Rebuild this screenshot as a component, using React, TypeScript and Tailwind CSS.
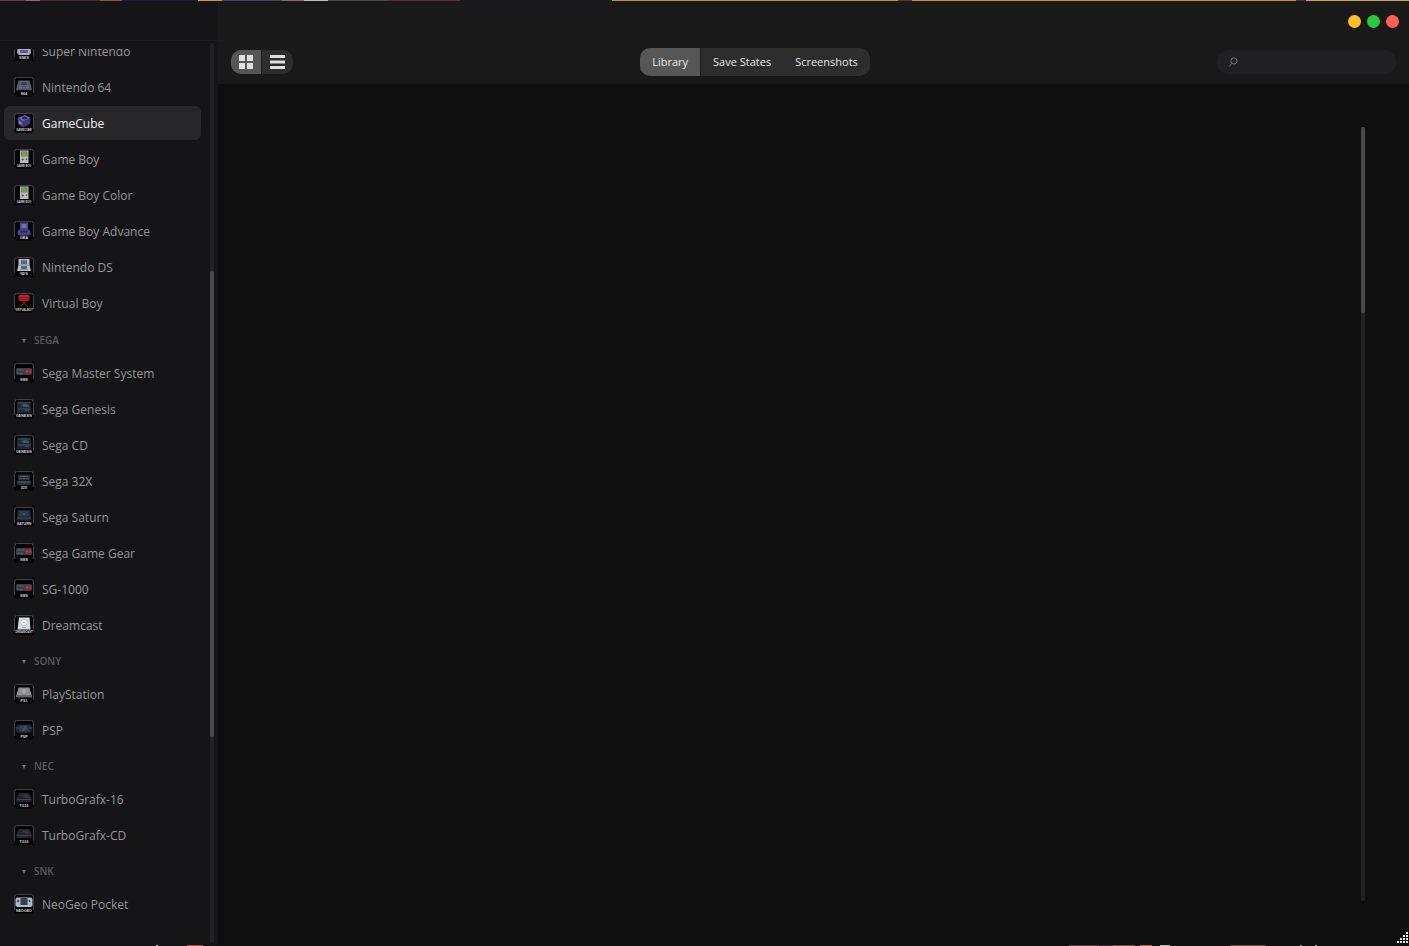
import { ReactNode } from 'react';

interface ConsoleItem {
  name: string;
  icon: ReactNode;
}

interface ConsoleGroup {
  label: string;
  items: ConsoleItem[];
}

const Tile = ({ label, children }: { label: string; children: ReactNode }) => (
  <svg viewBox="0 0 20 20" className="size-5 shrink-0" aria-hidden="true">
    <rect x="0.5" y="0.5" width="19" height="19" rx="2" fill="#030305" stroke="#0b0b0d" />
    <path d="M0.6 16V2.6a2 2 0 0 1 2-2h14.8a2 2 0 0 1 2 2V16" fill="none" stroke="#55585c" strokeWidth="0.8" />
    {children}
    <text x="10" y="18" textAnchor="middle" fontSize={label.length > 7 ? 2.7 : 3.6} fontWeight="700" fill="#d6d6da" fontFamily="Liberation Sans, sans-serif">{label}</text>
  </svg>
);

const snes = (
  <Tile label="SNES">
    <path d="M4 4h12l1 8-2 2H5l-2-2z" fill="#a9abc4" />
    <path d="M6 9h8v3H6z" fill="#5d56a0" />
  </Tile>
);
const n64 = (
  <Tile label="N64">
    <path d="M4.500 3.500h11l2 7.500c.8 1 .6 2.500-.5 2.500l-3-.5h-8l-3 .5c-1 0-1.300-1.500-.5-2.500z" fill="#53566c" />
    <path d="M7 5h6l.5 3.500h-7zM5 10.500h3M12 10.500h3" fill="#34374a" stroke="#777b92" strokeWidth="0.5" />
  </Tile>
);
const gamecube = (
  <Tile label="GAMECUBE">
    <path d="M3.500 5 11 2l5.500 3-7 3.500z" fill="#6863b4" />
    <path d="M3.500 5 9.500 8.500v6l-5.500-3.500z" fill="#4b4795" />
    <path d="M9.500 8.500l7-3.500-.5 6-6.500 3.500z" fill="#3f3a7d" />
    <ellipse cx="10.500" cy="5" rx="2.500" ry="1.200" fill="#25224f" />
    <path d="M5 8l2.500 1.500v2L5 10z" fill="#8e8ac5" />
  </Tile>
);
const gameboy = (
  <Tile label="GAME BOY">
    <path d="M6 1.500h8.500v12.500H6z" fill="#b8beb8" />
    <path d="M7 2.500h6.500v5H7z" fill="#69756f" />
    <path d="M8 3.200h4.500V7H8z" fill="#789b4c" />
    <path d="M7.500 10.500h2.500M8.700 9.300v2.500" stroke="#4d5350" strokeWidth="0.800" />
    <circle cx="12.500" cy="10.200" r="0.900" fill="#7c4961" />
  </Tile>
);
const gba = (
  <Tile label="GBA">
    <path d="M6 1.500h8v7l2.500 1.500v3.500l-2 1H5.500l-2-1V10L6 8.500z" fill="#49428b" />
    <path d="M7.500 3h5v4h-5z" fill="#6d729f" />
    <path d="M7 9h6v3H7z" fill="#343069" />
  </Tile>
);
const nds = (
  <Tile label="NDS">
    <path d="M4.500 2h11v6l1.500 6H3l1.500-6z" fill="#b4bdca" />
    <path d="M7 3.200h6v4H7zM7 9h6v3.500H7z" fill="#59657a" />
    <path d="M4.500 8h11" stroke="#79869b" strokeWidth="0.800" />
  </Tile>
);
const virtualBoy = (
  <Tile label="VIRTUALBOY">
    <path d="M4.500 3l1-1h9l1 1v4l-1.500 1H6L4.500 7z" fill="#c5202b" />
    <path d="M5 4.500h10M5.500 6.500h9" stroke="#781019" strokeWidth="0.700" />
    <path d="M8.500 8l1.500 2 1.500-2M10 10l-4.500 4M10 10l4.500 4" fill="none" stroke="#8b1a22" strokeWidth="1" />
  </Tile>
);
const masterSystem = (
  <Tile label="SMS">
    <path d="M3 5h14l1 1v5l-1 1H3l-1-1V6z" fill="#373e48" />
    <path d="M10.500 7l1.500-1H17v5h-4.500L10.500 9.500z" fill="#842c36" />
    <path d="M3 7h7M3 10.500h6" stroke="#5b6470" strokeWidth="0.800" />
    <circle cx="13" cy="8.500" r="1.100" fill="#b54650" />
    <circle cx="15.800" cy="8.500" r="0.900" fill="#b54650" />
  </Tile>
);
const genesis = (
  <Tile label="GENESIS">
    <path d="M3.500 2.500h13l1 11.500h-15z" fill="#1b2937" />
    <path d="M4 4h12M7 7c2-2 6-2 8 0M4 10h12" fill="none" stroke="#455a70" strokeWidth="0.900" />
    <path d="M9 6h6v2H9z" fill="#475463" />
    <path d="M11 11.500h4" stroke="#87505a" strokeWidth="0.600" />
  </Tile>
);
const sega32x = (
  <Tile label="32X">
    <path d="M5 3.500h10l1 1v4H4v-4zM3 9.500h14v3l-1 1.500H4l-1-1.500z" fill="#2b303d" />
    <path d="M6 5.500h8M5 8h10M4 11h12" stroke="#5b6170" strokeWidth="0.800" />
    <circle cx="10" cy="11.500" r="1.300" fill="#464b5b" />
  </Tile>
);
const saturn = (
  <Tile label="SATURN">
    <path d="M4 3h12l1.500 10.500h-15z" fill="#1f2d3a" />
    <path d="M5.500 4h9l.7 5h-10.500z" fill="#2b3b49" />
    <path d="M4 11h12" stroke="#42566a" strokeWidth="0.700" />
    <circle cx="10" cy="7" r="1" fill="#496075" />
  </Tile>
);
const dreamcast = (
  <Tile label="DREAMCAST">
    <path d="M5 2.500h10.500l1 12H3.500z" fill="#d7dce1" />
    <circle cx="10" cy="7.500" r="3.200" fill="#f0f1ef" stroke="#97aebd" strokeWidth="0.600" />
    <circle cx="10" cy="7.500" r="0.800" fill="#df8b5f" />
    <path d="M8 12.500h4" stroke="#6a93ab" strokeWidth="0.700" />
  </Tile>
);
const playstation = (
  <Tile label="PS1">
    <path d="M4.500 3.500h11L18 13H2z" fill="#8f9097" />
    <path d="M3 11h14l1 2.500H2z" fill="#63656d" />
    <circle cx="10" cy="7.500" r="3" fill="#a4a5ab" stroke="#74757e" strokeWidth="0.600" />
  </Tile>
);
const psp = (
  <Tile label="PSP">
    <path d="M4 4.500h12c3 1 3 7 0 8.500H4c-3-1.500-3-7.500 0-8.500z" fill="#1d2634" />
    <path d="M5.500 5.500h9v6h-9z" fill="#333d4e" />
    <path d="M7.500 11l3.500-5h2l-3.500 5z" fill="#4b5465" />
    <path d="M2.500 8h2M15.500 8h2" stroke="#5d7184" strokeWidth="0.800" />
  </Tile>
);
const turbografx = (
  <Tile label="TG16">
    <path d="M5 4h10l2.500 4.500v4.500h-15V9z" fill="#24252e" />
    <path d="M2.500 10.500h15" stroke="#454650" strokeWidth="0.900" />
    <path d="M7 5.500h7l1.500 3.500H12z" fill="#363741" />
  </Tile>
);
const neogeo = (
  <Tile label="NEOGEO">
    <path d="M2.500 3.500h15l1 2v6l-1.500 1.500H3l-1.500-1.500v-6z" fill="#aab9cb" />
    <path d="M6.500 4h7v7h-7z" fill="#35404f" />
    <path d="M3 7h2.500M4.200 5.700v2.500" stroke="#293342" strokeWidth="0.900" />
    <circle cx="15.500" cy="7" r="1" fill="#354052" />
  </Tile>
);

const nintendo: ConsoleItem[] = [
  { name: 'Super Nintendo', icon: snes },
  { name: 'Nintendo 64', icon: n64 },
  { name: 'GameCube', icon: gamecube },
  { name: 'Game Boy', icon: gameboy },
  { name: 'Game Boy Color', icon: gameboy },
  { name: 'Game Boy Advance', icon: gba },
  { name: 'Nintendo DS', icon: nds },
  { name: 'Virtual Boy', icon: virtualBoy },
];

const groups: ConsoleGroup[] = [
  {
    label: 'SEGA',
    items: [
      { name: 'Sega Master System', icon: masterSystem },
      { name: 'Sega Genesis', icon: genesis },
      { name: 'Sega CD', icon: genesis },
      { name: 'Sega 32X', icon: sega32x },
      { name: 'Sega Saturn', icon: saturn },
      { name: 'Sega Game Gear', icon: masterSystem },
      { name: 'SG-1000', icon: masterSystem },
      { name: 'Dreamcast', icon: dreamcast },
    ],
  },
  { label: 'SONY', items: [{ name: 'PlayStation', icon: playstation }, { name: 'PSP', icon: psp }] },
  { label: 'NEC', items: [{ name: 'TurboGrafx-16', icon: turbografx }, { name: 'TurboGrafx-CD', icon: turbografx }] },
  { label: 'SNK', items: [{ name: 'NeoGeo Pocket', icon: neogeo }] },
];

const ConsoleRow = ({ item, active }: { item: ConsoleItem; active?: boolean }) => (
  <li className="py-px">
    <button
      type="button"
      className={
        active
          ? 'flex h-[34px] w-full items-center gap-2 rounded-md bg-[#272729] px-2.5 text-left text-xs text-[#f2f2f2]'
          : 'flex h-[34px] w-full items-center gap-2 rounded-md px-2.5 text-left text-xs text-[#959598]'
      }
    >
      {item.icon}
      <span className="pt-0.5 whitespace-nowrap">{item.name}</span>
    </button>
  </li>
);

const Sidebar = () => (
  <aside className="flex w-[218px] shrink-0 flex-col bg-[#151517]">
    <div className="h-10 shrink-0 border-b border-[#1c1c1e]" />
    <div className="flex min-h-0 flex-1">
      <nav className="mt-2 min-w-0 flex-1 overflow-hidden pr-[9px] pl-1" aria-label="Consoles">
        <ul className="-mt-4 pb-px">
          {nintendo.map((item) => (
            <ConsoleRow key={item.name} item={item} active={item.name === 'GameCube'} />
          ))}
        </ul>
        {groups.map((group) => (
          <section key={group.label}>
            <button type="button" className="flex h-[33px] w-full items-center gap-2 pt-1 pl-[18px] text-[10px] font-semibold text-[#5b5b5e]">
              <svg viewBox="0 0 4 4" className="size-1" aria-hidden="true">
                <path d="M0 0h4L2 4z" fill="#6c6c6f" />
              </svg>
              {group.label}
            </button>
            <ul>
              {group.items.map((item) => (
                <ConsoleRow key={item.name} item={item} />
              ))}
            </ul>
          </section>
        ))}
      </nav>
      {/* scroll track */}
      <div className="mt-0.5 mr-1 mb-0.5 flex w-1 flex-col rounded-full bg-[#222224]">
        <div className="flex-[228]" />
        <div className="flex-[465] rounded-full bg-[#4a4a4c]" />
        <div className="flex-[206]" />
      </div>
    </div>
  </aside>
);

const Toolbar = () => (
  <div className="flex h-[43px] shrink-0 items-center justify-between bg-[#191919] px-[13px] pb-0.5">
    <div className="flex h-6 w-[62px] overflow-hidden rounded-[10px] bg-[#2d2d2d]">
      <button type="button" aria-label="Grid view" className="flex w-[31px] items-center justify-center border-r border-[#1c1c1c] bg-[#565656]">
        <svg viewBox="0 0 14 14" className="size-3.5" fill="#e0e0e0" aria-hidden="true">
          <path d="M0 0h6v6H0zM8 0h6v6H8zM0 8h6v6H0zM8 8h6v6H8z" />
        </svg>
      </button>
      <button type="button" aria-label="List view" className="flex w-[31px] items-center justify-center">
        <svg viewBox="0 0 15 14" className="h-3.5 w-[15px]" fill="#e0e0e0" aria-hidden="true">
          <path d="M0 0h15v3H0zM0 5.500h15v3H0zM0 11h15v3H0z" />
        </svg>
      </button>
    </div>
    <div className="flex h-7 overflow-hidden rounded-[10px] bg-[#2d2d2d] text-[11px] text-[#e6e6e6]">
      <button type="button" className="border-r border-[#1f1f1f] bg-[#565656] px-3 pt-0.5">Library</button>
      <button type="button" className="px-3 pt-0.5">Save States</button>
      <button type="button" className="px-3 pt-0.5">Screenshots</button>
    </div>
    <label className="flex h-6 w-[179px] items-center rounded-full bg-[#202022] px-3">
      <svg viewBox="0 0 9 10" className="h-2.5 w-[9px] shrink-0" fill="none" stroke="#777779" strokeWidth="0.900" aria-hidden="true">
        <circle cx="5" cy="3.900" r="3.100" />
        <path d="M2.800 6.200 0.500 9.500" />
      </svg>
      <input type="text" aria-label="Search" className="min-w-0 flex-1 bg-transparent pl-2 text-[11px] text-[#e6e6e6] outline-none" />
    </label>
  </div>
);

const ResizeGrip = () => (
  <svg viewBox="0 0 11 11" className="absolute right-px bottom-0.5 size-[11px]" fill="#e4e4e8" shapeRendering="crispEdges" aria-hidden="true">
    <path d="M9 0h2v2H9zM6 3h2v2H6zM9 3h2v2H9zM3 6h2v2H3zM6 6h2v2H6zM9 6h2v2H9zM0 9h2v2H0zM3 9h2v2H3zM6 9h2v2H6zM9 9h2v2H9z" />
  </svg>
);

// slivers of the desktop wallpaper above and below the window: [start, width, colour]
type Sliver = [number, number, string];

const topSlivers: Sliver[] = [
  [0, 26, '#6d3a42'],
  [26, 14, '#8f6a62'],
  [40, 60, '#4a2930'],
  [100, 22, '#7c5a4a'],
  [122, 76, '#1d1b2c'],
  [198, 24, '#c79a3a'],
  [222, 60, '#4c4a58'],
  [282, 22, '#7d6f74'],
  [304, 24, '#b9bcc0'],
  [328, 60, '#4d4650'],
  [388, 72, '#5d3038'],
  [460, 152, '#1c1826'],
  [612, 286, '#c98d38'],
  [898, 14, '#5a3430'],
  [912, 384, '#cd9038'],
  [1296, 10, '#4a2f34'],
  [1306, 103, '#d2a03c'],
];

const bottomSlivers: Sliver[] = [
  [156, 2, '#b9b9bb'],
  [187, 16, '#b8483a'],
  [1069, 30, '#5c3a36'],
  [1099, 14, '#3a2a2c'],
  [1113, 22, '#7a4a40'],
  [1140, 12, '#c06a3c'],
  [1160, 10, '#b9b9bb'],
  [1230, 36, '#6a4630'],
  [1300, 2, '#8f8f92'],
  [1315, 2, '#a8a8aa'],
];

const Wallpaper = ({ slivers }: { slivers: Sliver[] }) => (
  <svg viewBox="0 0 1409 1" preserveAspectRatio="none" className="block h-px w-full shrink-0" aria-hidden="true">
    {slivers.map(([x, width, color]) => (
      <rect key={x} x={x} width={width} height="1" fill={color} />
    ))}
  </svg>
);

export default function App() {
  return (
    <div className="flex h-screen flex-col bg-[#0f0f0f] font-['Open_Sans',sans-serif]">
      <Wallpaper slivers={topSlivers} />
      <div className="flex min-h-0 flex-1">
        <Sidebar />
        <div className="relative flex min-w-0 flex-1 flex-col">
          <header className="flex h-10 shrink-0 items-center justify-end gap-1.5 border-b border-[#1b1b1b] bg-[#191919] pt-0.5 pr-2.5">
            <button type="button" aria-label="Minimize" className="size-[13px] rounded-full bg-[#ffbd2e]" />
            <button type="button" aria-label="Maximize" className="size-[13px] rounded-full bg-[#28c840]" />
            <button type="button" aria-label="Close" className="size-[13px] rounded-full bg-[#ff5f57]" />
          </header>
          <Toolbar />
          <main className="flex flex-1 justify-end pt-[43px] pr-11 pb-11">
            <div className="flex w-1 flex-col rounded-full bg-[#222224]">
              <div className="flex-[186] rounded-full bg-[#4a4a4c]" />
              <div className="flex-[588]" />
            </div>
          </main>
          <ResizeGrip />
        </div>
      </div>
      <Wallpaper slivers={bottomSlivers} />
    </div>
  );
}
